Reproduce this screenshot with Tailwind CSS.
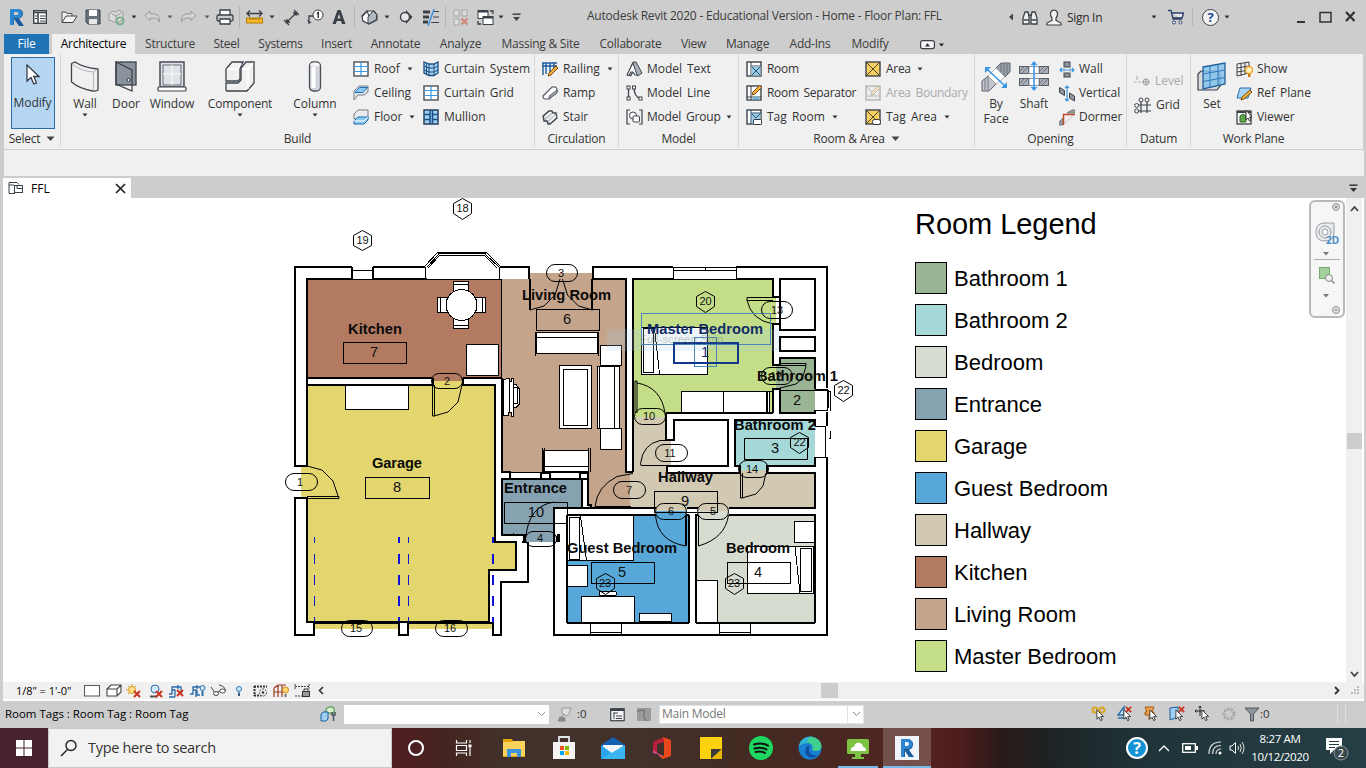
<!DOCTYPE html>
<html lang="en">
<head>
<meta charset="utf-8">
<title>Autodesk Revit 2020</title>
<script src="https://cdn.jsdelivr.net/npm/@tailwindcss/browser@4"></script>
</head>
<body class="w-[1366px] h-[768px] overflow-hidden flex flex-col bg-[#cdcdcd] text-[#2b2b2b] font-['Open_Sans','Noto_Sans',sans-serif] text-[12px] leading-none">

<svg width="0" height="0" class="hidden">
  <defs>
    <symbol id="dn" viewBox="0 0 8 6"><path d="M1.500 1.500h5L4 4.500z" fill="#333"/></symbol>
    <symbol id="dnb" viewBox="0 0 9 6"><path d="M.5 .5h8L4.500 5z" fill="#444"/></symbol>
    <symbol id="cur" viewBox="0 0 10 14"><path d="M1 .8v10.200l2.500-2.200 1.700 4 1.700-.8-1.700-3.800h3.300z" fill="#fff" stroke="#333" stroke-width="1"/></symbol>
    <symbol id="redx" viewBox="0 0 8 8"><path d="M1 1l6 6M7 1l-6 6" stroke="#c8331f" stroke-width="2"/></symbol>
    <linearGradient id="g1" x1="0" y1="0" x2="1" y2="1"><stop offset="0" stop-color="#fff"/><stop offset="1" stop-color="#b9bec4"/></linearGradient>
    <linearGradient id="g2" x1="0" y1="0" x2="0" y2="1"><stop offset="0" stop-color="#7f8896"/><stop offset="1" stop-color="#c3c8d0"/></linearGradient>
    <pattern id="hat" width="3" height="3" patternUnits="userSpaceOnUse"><rect width="3" height="3" fill="#c3c6cc"/><path d="M0 3L3 0" stroke="#555c68" stroke-width=".8"/></pattern>
  </defs>
</svg>

<!-- Title bar -->
<header class="h-[34px] flex items-center shrink-0">
  <svg class="ml-[8px]" width="17" height="20" viewBox="0 0 17 20"><path d="M2 2v16h4v-6l5 7h5l-5-7.500q4-1.500 4-5Q15 2 9 2z" fill="#1c5c9e"/><path d="M2 2h7q5 0 5 4.500T9 11H5.500v7H2z" fill="#2d86cf"/><path d="M6 5h2.500q2 0 2 1.500T8.500 8H6z" fill="#cdcdcd"/></svg>
  <svg class="ml-[8px]" width="14" height="16" viewBox="0 0 14 16"><rect x=".7" y="1.700" width="12.600" height="12.600" fill="#fff" stroke="#3a4048" stroke-width="1.400"/><path d="M1 3.500h12M5 4v10" stroke="#3a4048" stroke-width="1.500"/><path d="M7 7h5M7 9.500h5M7 12h5M2 7h2M2 9.500h2" stroke="#3a4048"/></svg>
  <svg class="ml-[14px]" width="17" height="14" viewBox="0 0 17 14"><path d="M1 12V2h4l1 1.500h5V6" fill="#eee" stroke="#555"/><path d="M1 12.500L5 6h11l-4 6.500z" fill="#f3f3f3" stroke="#444"/></svg>
  <svg class="ml-[7px]" width="16" height="16" viewBox="0 0 16 16"><path d="M1 1h14v14H3l-2-2z" fill="#69727d" stroke="#3a4048"/><rect x="4" y="1" width="8" height="6" fill="#fff"/><rect x="4" y="10" width="8" height="5" fill="#e8e8e8"/></svg>
  <svg class="ml-[7px]" width="17" height="17" viewBox="0 0 17 17"><path d="M1 5l4-3 3 1.500L11 1l4 2.500v7L9 14 1 11z" fill="#dcdcdc" stroke="#999"/><path d="M4 5l4 2v6M8 7l5-3" stroke="#999" fill="none"/><circle cx="12" cy="12" r="3.500" fill="none" stroke="#7dae8b" stroke-width="2"/></svg>
  <svg class="ml-[5px]" width="8" height="6"><use href="#dn"/></svg>
  <svg class="ml-[6px]" width="17" height="14" viewBox="0 0 17 14"><path d="M1 5.500L6 1v3h5q5 1 4.500 8Q14 8 10.500 8H6v2.500z" fill="#d4d4d4" stroke="#9a9a9a"/></svg>
  <svg class="ml-[5px] opacity-70" width="8" height="6"><use href="#dn"/></svg>
  <svg class="ml-[6px]" width="17" height="14" viewBox="0 0 17 14"><path d="M16 5.500L11 1v3H6Q1 5 1.500 12 3 8 6.500 8H11v2.500z" fill="#d4d4d4" stroke="#9a9a9a"/></svg>
  <svg class="ml-[6px] opacity-70" width="8" height="6"><use href="#dn"/></svg>
  <svg class="ml-[5px]" width="18" height="16" viewBox="0 0 18 16"><path d="M4 6V1h10v5" fill="#fff" stroke="#3a4048" stroke-width="1.300"/><rect x="1" y="6" width="16" height="6" rx="1.500" fill="#c8ccd1" stroke="#3a4048" stroke-width="1.300"/><path d="M4 10h10v5H4z" fill="#fff" stroke="#3a4048" stroke-width="1.300"/></svg>
  <div class="ml-[5px] w-px h-[22px] bg-[#b5b5b5]"></div>
  <svg class="ml-[6px]" width="17" height="16" viewBox="0 0 17 16"><path d="M1 4.500h15M4 1.500L1 4.500l3 3M13 1.500l3 3-3 3" stroke="#3a4048" stroke-width="1.300" fill="none"/><rect x=".5" y="9" width="16" height="5" fill="#f5b829" stroke="#b57b08"/><path d="M4 9v2M7 9v2M10 9v2M13 9v2" stroke="#8a5a00"/></svg>
  <svg class="ml-[5px]" width="8" height="6"><use href="#dn"/></svg>
  <svg class="ml-[7px]" width="17" height="17" viewBox="0 0 17 17"><path d="M4 13L13 4M1 11l5 5M11 1l5 5" stroke="#3a4048" stroke-width="1.200"/><path d="M2.500 14.500l1-5 4 4zM14.500 2.500l-5 1 4 4z" fill="#3a4048"/></svg>
  <svg class="ml-[7px]" width="17" height="16" viewBox="0 0 17 16"><path d="M2 14V7h5M1 11l1 3 2-1" stroke="#3a4048" stroke-width="1.300" fill="none"/><circle cx="11" cy="6" r="5" fill="#fff" stroke="#3a4048"/><path d="M9.800 4.500L11.200 3.500V9" stroke="#222" stroke-width="1.300" fill="none"/></svg>
  <svg class="ml-[8px]" width="14" height="16" viewBox="0 0 14 16"><path d="M.5 15L5.500 1h3l5 14h-3.500l-1-3H4.800l-1 3zM5.500 9.500h3L7 4.800z" fill="#3a4048" fill-rule="evenodd"/></svg>
  <div class="ml-[8px] w-px h-[22px] bg-[#b5b5b5]"></div>
  <svg class="ml-[6px]" width="17" height="16" viewBox="0 0 17 16"><path d="M1 7l5-5 7 0 3 4v5l-8 4-6-3z" fill="#fff" stroke="#3a4048" stroke-width="1.200"/><path d="M7 8l5-6 4 4-1 5-8 4z" fill="#b4bac2" stroke="#3a4048"/><path d="M1 7.500L6 2l2 5" fill="none" stroke="#3a4048" stroke-width="1.200"/></svg>
  <svg class="ml-[5px]" width="8" height="6"><use href="#dn"/></svg>
  <svg class="ml-[8px]" width="14" height="16" viewBox="0 0 14 16"><path d="M7 1l6.500 7L7 15z" fill="#3a4048"/><circle cx="6" cy="8" r="4.500" fill="#e8e8e8" stroke="#3a4048" stroke-width="1.400"/></svg>
  <svg class="ml-[9px]" width="18" height="17" viewBox="0 0 18 17"><path d="M1 3h7M1 8h6M1 13h5" stroke="#3a4048" stroke-width="3"/><path d="M12 2.500h5M11 8h6M9 13.500h8" stroke="#3a4048"/><path d="M12 0L6 17" stroke="#3a8dde" stroke-width="1.400"/></svg>
  <div class="ml-[5px] w-px h-[22px] bg-[#b5b5b5]"></div>
  <svg class="ml-[7px]" width="16" height="17" viewBox="0 0 16 17"><g fill="#ddd" stroke="#a5a5a5"><rect x="1" y="1" width="5" height="6"/><rect x="9" y="1" width="5" height="6"/><rect x="1" y="10" width="5" height="6"/></g><path d="M8.500 9.500l6 6M14.500 9.500l-6 6" stroke="#cf8877" stroke-width="2.200"/></svg>
  <svg class="ml-[8px]" width="18" height="17" viewBox="0 0 18 17"><rect x="1" y="1.500" width="10" height="8" fill="#fff" stroke="#3a4048"/><rect x="6" y="7.500" width="10" height="8" fill="#fff" stroke="#3a4048"/><path d="M1 2.500h10M6 8.500h10" stroke="#3a4048" stroke-width="2"/><path d="M13 2h3v3M1 12v3h3" stroke="#3a4048" fill="none" stroke-width="1.300"/></svg>
  <svg class="ml-[2px]" width="8" height="6"><use href="#dn"/></svg>
  <svg class="ml-[7px]" width="9" height="9" viewBox="0 0 9 9"><path d="M.5 1.200h8" stroke="#444" stroke-width="1.500"/><path d="M1 4h7L4.500 8z" fill="#444"/></svg>
  <div class="ml-[66px] w-[356px] whitespace-nowrap text-[#3c3c3c] tracking-[-0.22px] mt-[-3px]">Autodesk Revit 2020 - Educational Version - Home - Floor Plan: FFL</div>
  <svg class="ml-[65px]" width="6" height="8" viewBox="0 0 6 8"><path d="M5 .5v7L1 4z" fill="#444"/></svg>
  <svg class="ml-[8px]" width="16" height="17" viewBox="0 0 16 17"><g fill="#f2f2f2" stroke="#3a4048" stroke-width="1.300"><path d="M1 15V9l2-6h3l1 5v7zM15 15V9l-2-6h-3L9 8v7z"/><path d="M1.500 11h5M9.500 11h5M6.500 6h3" /></g></svg>
  <svg class="ml-[8px]" width="16" height="17" viewBox="0 0 16 17"><path d="M1 16v-2l5-2.500V9Q4 7 4.500 4 5.500 1 8 1t3.500 3Q12 7 10 9v2.500l5 2.500v2z" fill="#f4f4f4" stroke="#3a4048" stroke-width="1.200"/></svg>
  <div class="ml-[5px] w-[40px] tracking-[-0.3px] mt-[2px] whitespace-nowrap">Sign In</div>
  <svg class="ml-[43px]" width="8" height="6"><use href="#dn"/></svg>
  <svg class="ml-[9px]" width="17" height="16" viewBox="0 0 17 16"><path d="M1 1.500h3l2 8.500h9M4.500 4h12L15 9H6" fill="#e8e8ee" stroke="#2c3f6b" stroke-width="1.400"/><circle cx="7" cy="13.500" r="1.500" fill="#fff" stroke="#2c3f6b"/><circle cx="13.500" cy="13.500" r="1.500" fill="#fff" stroke="#2c3f6b"/></svg>
  <div class="ml-[8px] w-px h-[18px] bg-[#b5b5b5]"></div>
  <div class="ml-[9px] w-[17px] h-[17px] rounded-full border border-[#3a4048] bg-[#f4f4f4] text-[#1f4a9a] font-bold text-[13px] flex items-center justify-center">?</div>
  <svg class="ml-[4px]" width="8" height="6"><use href="#dn"/></svg>
  <svg class="ml-[65px]" width="60" height="16" viewBox="0 0 60 16"><path d="M1 13h8" stroke="#333" stroke-width="2"/><rect x="24" y="3.500" width="11" height="9.500" fill="none" stroke="#333" stroke-width="1.500"/><path d="M50 3l8.500 9M58.500 3L50 12" stroke="#333" stroke-width="2.300"/></svg>
</header>

<!-- Ribbon tabs -->
<nav class="h-[20px] flex items-center shrink-0 pl-[4px] text-center whitespace-nowrap text-[#3c3c3c] tracking-[-0.25px] *:leading-[20px] *:h-[20px]">
  <div class="w-[45px] bg-[#1f73b7] text-white">File</div>
  <div class="ml-[3px] w-[83px] bg-[#f0f0f0] text-black">Architecture</div>
  <div class="ml-px w-[68px]">Structure</div><div class="w-[45px]">Steel</div><div class="w-[63px]">Systems</div><div class="w-[49px]">Insert</div><div class="w-[69px]">Annotate</div><div class="w-[61px]">Analyze</div><div class="w-[99px]">Massing &amp; Site</div><div class="w-[81px]">Collaborate</div><div class="w-[45px]">View</div><div class="w-[63px]">Manage</div><div class="w-[62px]">Add-Ins</div><div class="w-[58px]">Modify</div>
  <svg class="ml-[21px]" width="26" height="20" viewBox="0 0 26 20"><rect x=".6" y="6.600" width="13.800" height="8" rx="2" fill="#f6f6f6" stroke="#3a4048" stroke-width="1.200"/><path d="M5 12.500h5L7.500 9z" fill="#333"/><path d="M19 9.500h5l-2.500 3z" fill="#222"/></svg>
</nav>

<!-- Ribbon -->
<section class="h-[95px] flex ml-[4px] mr-[3px] shrink-0 bg-[#f0f0f0] tracking-[-0.05px] whitespace-nowrap text-[#333]">
  <div class="w-[57px] border-r border-[#d8d8d8] mb-[2px] flex flex-col items-center">
    <div class="mt-[3px] ml-px w-[44px] h-[72px] border border-[#2a6ca8] bg-[#b5d6f3] flex flex-col items-center tracking-[-0.1px]">
      <svg class="mt-[5px]" width="16" height="24" viewBox="0 0 16 24"><path d="M2 2v16l4-3.500 2.800 6.500 2.700-1.200L8.800 13.500H14z" fill="#fff" stroke="#333a44" stroke-width="1.300"/></svg>
      <span class="mt-[10px]">Modify</span>
    </div>
    <div class="mt-[4px] flex items-center gap-[6px] tracking-[-0.3px]">Select <svg width="9" height="6"><use href="#dnb"/></svg></div>
  </div>
  <div class="w-[474px] border-r border-[#d8d8d8] mb-[2px] flex flex-col">
    <div class="flex h-[79px] pl-[4px]">
      <div class="w-[40px] flex flex-col items-center"><svg class="mt-[6px]" width="30" height="32" viewBox="0 0 30 32"><path d="M1.500 3.500L5 2q9 6 23 7v21q-3 1.500-5 1Q10 29 1.500 22z" fill="url(#g1)" stroke="#3d434b" stroke-width="1.300"/><path d="M1.500 3.500Q10 11 23.500 12v19M23.500 12L28 9" stroke="#9aa0a8" fill="none" opacity=".7"/></svg><span class="mt-[6px]">Wall</span><svg class="mt-[2px]" width="8" height="6"><use href="#dn"/></svg></div>
      <div class="w-[42px] flex flex-col items-center"><svg class="mt-[6px]" width="24" height="32" viewBox="0 0 24 32"><rect x="2" y="2" width="20" height="23" fill="#8a929c" stroke="#3d434b" stroke-width="1.300"/><path d="M2 2l16 8v21L2 24z" fill="url(#g1)" stroke="#3d434b" stroke-width="1.300"/><circle cx="14.500" cy="20" r="1.500" fill="#fff" stroke="#333"/></svg><span class="mt-[6px]">Door</span></div>
      <div class="w-[50px] flex flex-col items-center"><svg class="mt-[6px]" width="30" height="32" viewBox="0 0 30 32"><rect x="3" y="2" width="24" height="25" fill="#dfe2e6" stroke="#3d434b" stroke-width="1.400"/><rect x="6" y="5" width="18" height="20" fill="url(#g2)" stroke="#646c77"/><path d="M15 5v20M6 14h18" stroke="#f2f2f2" stroke-width="1.500"/><rect x="1" y="27" width="28" height="4" rx="1" fill="#fff" stroke="#3d434b" stroke-width="1.200"/></svg><span class="mt-[6px] tracking-[-0.15px]">Window</span></div>
      <div class="w-[86px] flex flex-col items-center"><svg class="mt-[6px]" width="32" height="32" viewBox="0 0 32 32"><path d="M2 9l6-7h11l-3 6v11l-2 2H2z" fill="url(#g1)" stroke="#3d434b" stroke-width="1.300"/><path d="M2 23h12l3-3V8l5-6h8v21l-7 8H3l-1-1z" fill="url(#g1)" stroke="#3d434b" stroke-width="1.300"/><path d="M3 9h11l3-5M18 9h6v20M24 9l5-6" stroke="#fff" fill="none" stroke-width="1.300"/></svg><span class="mt-[6px] tracking-[-0.2px]">Component</span><svg class="mt-[2px]" width="8" height="6"><use href="#dn"/></svg></div>
      <div class="w-[64px] flex flex-col items-center"><svg class="mt-[6px]" width="14" height="32" viewBox="0 0 14 32"><rect x="1.500" y="2" width="11" height="29" rx="4" fill="#d2d6db" stroke="#4a5058" stroke-width="1.300"/><rect x="3.500" y="7" width="4" height="21" fill="#fff"/><ellipse cx="7" cy="4.500" rx="4.500" ry="2" fill="#f7f7f7"/></svg><span class="mt-[6px]">Column</span><svg class="mt-[2px]" width="8" height="6"><use href="#dn"/></svg></div>
      <div class="ml-[6px] w-[70px] pt-[3px] *:h-[24px] *:flex *:items-center *:gap-[5px]">
        <div><svg width="16" height="16" viewBox="0 0 16 16"><rect x="1" y="1" width="14" height="14" fill="#fff" stroke="#3d434b" stroke-width="1.300"/><path d="M8 1v14M1 5.500h14M1 10.500h14" stroke="#3a97e0" stroke-width="1.200"/></svg>Roof <svg class="ml-px" width="8" height="6"><use href="#dn"/></svg></div>
        <div><svg width="16" height="16" viewBox="0 0 16 16"><path d="M1 15V6l5-5h9v6l-4 3H5l-4 5z" fill="#e4e7ea" stroke="#777e87"/><path d="M2 7.500l4.500-5h8l-4.500 5z" fill="#8ccaf2" stroke="#1b6fb5"/></svg>Ceiling</div>
        <div><svg width="16" height="16" viewBox="0 0 16 16"><path d="M1 10V5l4-4h10v9z" fill="#e9ebed" stroke="#777e87"/><path d="M1 12l4-4h10v3l-4 4H1z" fill="#8ccaf2" stroke="#1b6fb5"/><path d="M1 12h10l4-4" fill="none" stroke="#fff"/></svg>Floor <svg class="ml-px" width="8" height="6"><use href="#dn"/></svg></div>
      </div>
      <div class="w-[108px] pt-[3px] [word-spacing:2px] *:h-[24px] *:flex *:items-center *:gap-[5px]">
        <div><svg width="16" height="16" viewBox="0 0 16 16"><path d="M1 1l5 2h5l4-2v11l-4 2.500H6L1 12z" fill="#a9d6f5" stroke="#1d4f80" stroke-width="1.300"/><path d="M6 3v11M11 3v11M1 5l5 2h5l4-2M1 9l5 2h5l4-2M3.500 2v11" stroke="#1d4f80" fill="none"/></svg>Curtain System</div>
        <div><svg width="16" height="16" viewBox="0 0 16 16"><rect x="1" y="1" width="14" height="14" fill="#fff" stroke="#3d434b" stroke-width="1.300"/><path d="M8 1v14M1 5.500h14M1 10.500h14" stroke="#3a97e0" stroke-width="1.200"/></svg>Curtain Grid</div>
        <div><svg width="16" height="16" viewBox="0 0 16 16"><rect x="1" y="1" width="14" height="14" fill="#9fd0f3" stroke="#26405c" stroke-width="1.500"/><path d="M7 1v14M9.500 1v14M1 5.500h6M10 5.500h5M1 10.500h6M10 10.500h5" stroke="#1d5288" stroke-width="1.600"/></svg>Mullion</div>
      </div>
    </div>
    <div class="text-center tracking-[-0.2px]">Build</div>
  </div>
  <div class="w-[84px] border-r border-[#d8d8d8] mb-[2px] flex flex-col">
    <div class="h-[79px] pl-[7px] pt-[3px] *:h-[24px] *:flex *:items-center *:gap-[5px]">
      <div><svg width="16" height="16" viewBox="0 0 16 16"><path d="M0 2h15M0 5h15M1 2v12M4 2v11M8 2v9M12 2v6" stroke="#1d5c9a" stroke-width="1.400"/><path d="M6 15l1-3 7-7 2 2-7 7z" fill="#f5b13a" stroke="#7d4b10"/></svg>Railing <svg class="ml-px" width="8" height="6"><use href="#dn"/></svg></div>
      <div><svg width="16" height="16" viewBox="0 0 16 16"><path d="M1 11L10 2q5-1 5 3v2l-8 7H3q-2 0-2-3z" fill="#fff" stroke="#555c66" stroke-width="1.200"/><path d="M7 14v-3l8-6v3z" fill="#9aa0a8" stroke="#555c66" stroke-width=".8"/></svg>Ramp</div>
      <div><svg width="16" height="16" viewBox="0 0 16 16"><path d="M1 7l6-5h3l1 2h3l1 5-7 6H6L5 12H2z" fill="#c2c6cc" stroke="#3d434b" stroke-width="1.300"/><path d="M3 8l6-5M5 11l7-6M8 13l6-6" stroke="#fff" stroke-width="1.500"/></svg>Stair</div>
    </div>
    <div class="text-center tracking-[-0.2px]">Circulation</div>
  </div>
  <div class="w-[120px] border-r border-[#d8d8d8] mb-[2px] flex flex-col">
    <div class="h-[79px] pl-[7px] pt-[3px] [word-spacing:2px] *:h-[24px] *:flex *:items-center *:gap-[4px]">
      <div><svg width="17" height="16" viewBox="0 0 17 16"><path d="M1 14L7 1h3l6 11-4 3-2-3H6l-1 3z" fill="#aab0b8" stroke="#3d434b"/><path d="M1 14L7 2l4 12H8.500L7.500 11H4.500L3.500 14z" fill="#fff" stroke="#3d434b"/></svg>Model Text</div>
      <div><svg width="17" height="16" viewBox="0 0 17 16"><path d="M2.500 2v12M8 2q0 10 7 12" stroke="#3d434b" stroke-width="1.300" fill="none"/><g fill="#fff" stroke="#3d434b"><rect x="1" y="1" width="3" height="3"/><rect x="1" y="12" width="3" height="3"/><rect x="6.500" y="1" width="3" height="3"/><rect x="13" y="12" width="3" height="3"/></g></svg>Model Line</div>
      <div class="tracking-[-0.2px]"><svg width="17" height="16" viewBox="0 0 17 16"><path d="M4 1H1v14h3M13 1h3v14h-3" stroke="#3d434b" stroke-width="1.200" fill="none"/><circle cx="7" cy="6.500" r="3.500" fill="#fff" stroke="#3d434b"/><rect x="7" y="7" width="6.500" height="6" rx="1" fill="#fff" stroke="#3d434b"/></svg>Model Group <svg width="8" height="6"><use href="#dn"/></svg></div>
    </div>
    <div class="text-center tracking-[-0.2px]">Model</div>
  </div>
  <div class="w-[236px] border-r border-[#d8d8d8] mb-[2px] flex flex-col">
    <div class="h-[79px] pl-[7px] flex [word-spacing:2px] tracking-[-0.3px]">
      <div class="w-[119px] pt-[3px] *:h-[24px] *:flex *:items-center *:gap-[5px]">
        <div><svg width="16" height="16" viewBox="0 0 16 16"><rect x="1" y="1" width="14" height="14" fill="#fff" stroke="#3d434b" stroke-width="1.400"/><path d="M5 1v14M5 5h10" stroke="#3d434b"/><rect x="5.500" y="5.500" width="9" height="9" fill="#9ccbe6"/><path d="M6 6l8 8M14 6l-8 8" stroke="#26506e"/></svg>Room</div>
        <div><svg width="16" height="16" viewBox="0 0 16 16"><rect x="1" y="1" width="14" height="14" fill="#fff" stroke="#3d434b" stroke-width="1.400"/><path d="M5 1v14M1 12h14" stroke="#3d434b"/><path d="M5.500 14.500l4-4 5 4z" fill="#6fb4de"/><path d="M6 10l1-3 6.500-6.500 2 2L9 9z" fill="#f5b13a" stroke="#7d4b10"/></svg>Room Separator</div>
        <div class="tracking-[0px]"><svg width="16" height="16" viewBox="0 0 16 16"><rect x="1" y="1" width="14" height="14" fill="#fff" stroke="#3d434b" stroke-width="1.400"/><rect x="5.500" y="4.500" width="9" height="10" fill="#9ccbe6"/><path d="M5 1v14M5 4h10M6 5l4 4 4-4" stroke="#26506e" fill="none"/><rect x="7.500" y="10.500" width="8" height="5" rx="1" fill="#fff" stroke="#333"/></svg>Tag Room <svg class="ml-px" width="8" height="6"><use href="#dn"/></svg></div>
      </div>
      <div class="pt-[3px] *:h-[24px] *:flex *:items-center *:gap-[5px]">
        <div><svg width="16" height="16" viewBox="0 0 16 16"><rect x="1" y="1" width="14" height="14" fill="#f7cf5e" stroke="#3d434b" stroke-width="1.400"/><path d="M1 1l14 14M15 1L1 15" stroke="#4b4330"/></svg>Area <svg width="8" height="6"><use href="#dn"/></svg></div>
        <div class="text-[#ababab]"><svg width="16" height="16" viewBox="0 0 16 16"><rect x="1" y="1" width="14" height="14" fill="#ececec" stroke="#b4b4b4" stroke-width="1.400"/><path d="M1 11h14M1 1l6 6M7 9l6-7" stroke="#b9b9b9"/><path d="M6 10l1-3 6-6 2 2-6 6z" fill="#f2e3c8" stroke="#c4bba9"/></svg>Area Boundary</div>
        <div class="tracking-[0px]"><svg width="16" height="16" viewBox="0 0 16 16"><rect x="1" y="1" width="14" height="14" fill="#f7cf5e" stroke="#3d434b" stroke-width="1.400"/><path d="M1 1l14 14M15 1L1 15" stroke="#4b4330"/><rect x="7.500" y="10.500" width="8" height="5" rx="2" fill="#fff" stroke="#333"/></svg>Tag Area <svg class="ml-px" width="8" height="6"><use href="#dn"/></svg></div>
      </div>
    </div>
    <div class="flex items-center justify-center gap-[6px] tracking-[-0.2px]">Room &amp; Area <svg width="9" height="6"><use href="#dnb"/></svg></div>
  </div>
  <div class="w-[152px] border-r border-[#d8d8d8] mb-[2px] flex flex-col">
    <div class="h-[79px] flex">
      <div class="w-[42px] flex flex-col items-center"><svg class="mt-[6px]" width="30" height="32" viewBox="0 0 30 32"><path d="M1 31V21l6-5 8 8-7 7z" fill="#c3c6cc" stroke="#5b626c"/><path d="M15 8l5-5h9v9l-5 5z" fill="#9ea3ab" stroke="#5b626c"/><path d="M4 19v11M7 17v13M20 4v8M23 4v12M26 4v10" stroke="#5b626c" stroke-width=".8"/><path d="M7 16l8-8 9 9-9 7z" fill="#fff" stroke="#9aa0a8" stroke-width=".7"/><path d="M6 9l18 17" stroke="#3a97e8" stroke-width="1.600"/><path d="M4 7h6l-6 6zM26 28h-6l6-6z" fill="#3a97e8"/></svg><span class="mt-[6px]">By</span><span class="mt-[3px]">Face</span></div>
      <div class="w-[34px] flex flex-col items-center"><svg class="mt-[6px]" width="32" height="32" viewBox="0 0 32 32"><g fill="#a9adb5" stroke="#5b626c"><rect x="1.500" y="6.500" width="9" height="7"/><rect x="21.500" y="6.500" width="9" height="7"/><rect x="1.500" y="18.500" width="9" height="7"/><rect x="21.500" y="18.500" width="9" height="7"/></g><path d="M2 11l4-4M4 13l6-6M2 23l4-4M4 25l6-6M22 11l4-4M24 13l6-6M22 23l4-4M24 25l6-6" stroke="#676e79" stroke-width=".9"/><path d="M11 6.500h10v7H11zM11 18.500h10v7H11z" fill="#fff" stroke="#8a9099"/><path d="M16 3v26" stroke="#3a97e8" stroke-width="1.600"/><path d="M12.500 5L16 1l3.500 4zM12.500 27l3.500 4 3.500-4z" fill="#3a97e8"/></svg><span class="mt-[6px]">Shaft</span></div>
      <div class="ml-[8px] pt-[3px] *:h-[24px] *:flex *:items-center *:gap-[4px]">
        <div><svg width="16" height="17" viewBox="0 0 16 17"><rect x="5" y="1" width="6" height="5" fill="#8f949d" stroke="#3d434b"/><rect x="5" y="12" width="6" height="4" fill="#8f949d" stroke="#3d434b"/><path d="M5 6v6M11 6v6" stroke="#bbb"/><path d="M1 9h14M3 7L1 9l2 2M13 7l2 2-2 2" stroke="#3a97e0" fill="none" stroke-width="1.200"/></svg>Wall</div>
        <div><svg width="16" height="17" viewBox="0 0 16 17"><path d="M.5 2.500l5 3v5l-5-3zM10.500 8l5 3v5l-5-3z" fill="#8f949d" stroke="#3d434b"/><path d="M8 1v15M6 3l2-2 2 2M6 14l2 2 2-2" stroke="#3a97e0" fill="none" stroke-width="1.200"/></svg>Vertical</div>
        <div><svg width="16" height="17" viewBox="0 0 16 17"><path d="M0 16v-3l4-4v7zM8 4l5-3h3v3z" fill="#9a9fa7" stroke="#777"/><path d="M4.500 16V5.500H16" stroke="#c04a26" stroke-width="1.500" fill="none"/><path d="M6 14l9-8" stroke="#999" stroke-dasharray="1 1"/></svg>Dormer</div>
      </div>
    </div>
    <div class="text-center tracking-[-0.2px]">Opening</div>
  </div>
  <div class="w-[64px] border-r border-[#d8d8d8] mb-[2px] flex flex-col">
    <div class="h-[79px] pl-[7px] pt-[15px] *:h-[24px] *:flex *:items-center *:gap-[5px]">
      <div class="text-[#ababab]"><svg width="16" height="16" viewBox="0 0 16 16"><path d="M0 9h9" stroke="#b0b0b0" stroke-dasharray="3 1"/><path d="M3 3v4" stroke="#aaa"/><circle cx="12" cy="9" r="3" fill="#ddd" stroke="#a5a5a5"/><path d="M12 5v8M8 9h8" stroke="#a5a5a5"/></svg>Level</div>
      <div class="gap-[4px]"><svg width="17" height="17" viewBox="0 0 17 17"><path d="M7 5v11M13 5v11M5 8h12M5 14h12" stroke="#3d434b" stroke-width="1.200"/><g fill="#f0f0f0" stroke="#3d434b"><circle cx="7" cy="3" r="2"/><circle cx="13" cy="3" r="2"/><circle cx="2.700" cy="8.500" r="2"/><circle cx="2.700" cy="14" r="2"/></g></svg>Grid</div>
    </div>
    <div class="text-center tracking-[-0.2px]">Datum</div>
  </div>
  <div class="w-[125px] flex flex-col">
    <div class="h-[79px] flex">
      <div class="w-[42px] flex flex-col items-center"><svg class="mt-[6px]" width="30" height="32" viewBox="0 0 30 32"><path d="M1 14l3-3h17l2 4v11l-3 4H1z" fill="#d8dadd" stroke="#3d434b" stroke-width="1.200"/><path d="M6 7l22-4v21L6 29z" fill="#7fc0ee" fill-opacity=".8" stroke="#215f98" stroke-width="1.300"/><path d="M13 6v21M21 4.500v21M6 14l22-4M6 21.500l22-4" stroke="#2f78b8"/></svg><span class="mt-[6px]">Set</span></div>
      <div class="ml-[3px] pt-[3px] [word-spacing:2px] *:h-[24px] *:flex *:items-center *:gap-[4px]">
        <div><svg width="17" height="17" viewBox="0 0 17 17"><path d="M1 3l12-2v11L1 15zM5 2v13M9 2v11M1 7l12-2M1 11l12-2" fill="none" stroke="#3d434b"/><circle cx="13" cy="9" r="3.500" fill="#fff2c4" stroke="#f0a020" stroke-width="1.300"/><rect x="12" y="13" width="2.500" height="3" fill="#c77b12"/></svg>Show</div>
        <div><svg width="17" height="17" viewBox="0 0 17 17"><path d="M4 3h11l-3 10H1z" fill="#a6d4f4" stroke="#2a6ca8"/><path d="M5 15l1-3 8-7 2 2-8 7z" fill="#f5b13a" stroke="#7d4b10"/></svg>Ref Plane</div>
        <div><svg width="17" height="17" viewBox="0 0 17 17"><rect x="1" y="2" width="14" height="13" fill="#f6f6f6" stroke="#3d434b" stroke-width="1.300"/><path d="M1 3h14" stroke="#3d434b" stroke-width="2"/><path d="M4 7l3-2 3 2v6H4z" fill="#5ea84d" stroke="#2f6b25"/><path d="M10 1v10l2-2 1.500 3 1.500-1-1.500-3H16z" fill="#fff" stroke="#333"/></svg>Viewer</div>
      </div>
    </div>
    <div class="text-center tracking-[-0.2px]">Work Plane</div>
  </div>
</section>
<div class="h-[26px] shrink-0 mt-px ml-[4px] mr-[2px] bg-[#f0f0f0]"></div>

<!-- Document tabs -->
<div class="h-[22px] shrink-0 flex items-end pl-[3px]">
  <div class="w-[128px] h-[20px] bg-white flex items-center tracking-[-0.3px]">
    <svg class="ml-[5px]" width="16" height="14" viewBox="0 0 16 14"><path d="M1 12.500v-11h8l2 2" fill="#fff" stroke="#3a4048"/><rect x="6.500" y="4.500" width="8" height="7" fill="#fff" stroke="#3a4048"/><path d="M9 4.500v3h5M1 4h5M1 12.500h6" stroke="#3a4048" fill="none"/></svg>
    <span class="ml-[7px] mt-[2px] text-black tracking-[0px]">FFL</span>
    <svg class="ml-[65px]" width="11" height="11" viewBox="0 0 11 11"><path d="M1 1l9 9M10 1l-9 9" stroke="#222" stroke-width="1.700"/></svg>
  </div>
  <svg class="ml-auto mr-[8px] mb-[5px]" width="9" height="9" viewBox="0 0 9 9"><path d="M.5 1.200h8" stroke="#333" stroke-width="1.500"/><path d="M1 4h7L4.500 8z" fill="#333"/></svg>
</div>

<!-- Drawing area -->
<main class="h-[484px] shrink-0 ml-[3px] mr-[2px] bg-white flex">
  <svg class="ml-[277px] shrink-0" width="590" height="484" viewBox="280 198 590 484" font-family="Liberation Sans, Arial, sans-serif" fill="none" stroke="#000" stroke-width="1" shape-rendering="crispEdges">
    <!-- room fills -->
    <g stroke="none">
      <path d="M307 279h194v99H307zM433 378h30v3h-30z" fill="#b17a61"/>
      <path d="M502 279h27v-6h64v6h33v193h4v35h-42v-35h-86z" fill="#c4a48a"/>
      <path d="M301 466h6v-81h126v-4h30v4h32v157h21v28h-27v52h4v7h-85v-7h-9v7h-84v-7h-8V498h-6z" fill="#e3d66f"/>
      <path d="M502 479h80v29h-28v34h-29v-7h-23z" fill="#86a1b0"/>
      <path d="M633 279h140v18h3v27h-3v40h3v24h-3v25h-107v4H633z" fill="#c3de87"/>
      <path d="M776 364h4v-6h35v55h-35v-25h-4z" fill="#9ab594"/>
      <path d="M735 420h80v46h-48v4h-27v-4h-5z" fill="#a5d8d6"/>
      <path d="M633 417h34v24h4v25h-4v7h73v-3h27v3h48v34H729v4h-31v-4h-11v4h-31v-4h-26v-34h3z" fill="#d2c9b2"/>
      <path d="M567 515h89v-4h31v4h2v108H567z" fill="#57a8d8"/>
      <path d="M696 515h2v-4h31v4h86v108H696z" fill="#d6dccf"/>
    </g>
    <!-- walls -->
    <g stroke-width="2">
      <path d="M308 466H295V267h57M373 267h52M500 267h29v12M593 279v-12h80M736 267h91v121M827 412v14M827 457v178H554V508h102M308 498H295v137h19v-13"/>
      <path d="M307 466V279h45M373 279h54M307 378V279M307 378h126M463 378h39M433 378v7H307v81M463 378v7h32v157h21v28h-27v52M463 385h32M307 498v124h183M399 622v13h9v-13M493 622v13h8V582h27v-40M352 267v12M373 267v12"/>
      <path d="M593 279h33v193h7M633 472V279h40M736 279h37v18h7v-18h35v51h-35v-6h-7v41h7v-7h35v31M815 410v3h-35v-24h-7v24M780 337h35v14h-35zM666 413h107M666 413v27h8v-20h54v46h-61v7h73v-7h-5v-46h80v6M815 457v9h-48v7h48v35h-86M502 378v94h8v7h-8v56h23M582 479v29h-28M567 515h89M567 515v108M689 515v108M689 515h-3M698 515h-2v108M729 515h86v108M567 623h122M696 623h119M687 508h11"/>
      <path d="M510 479h72M541 473v6h9v-6zM580 473h8v6h-8zM588 479v26h3v2M525 536v6h-3M557 536v6M554 508v28"/>
      <path d="M524 534v8M558 534v8" stroke-width="3"/>
    </g>
    <path d="M510 472.500h78M588.500 507.500h42"/>
    <!-- bay and windows -->
    <path d="M352 279.500h149.500v99M425.500 267v12M499.500 267v12M425 266l13-14h48l14 14M428 268l12-13h44l13 13M427 267l12-13M499 267l-14-13M352 270.500h21M673.500 267v12h63v-12zM673 270.500h63M705.500 267v4"/>
    <path d="M438 253h48" stroke-width="2"/>
    <path d="M590 623.500h31v11h-31zM590 632.500h31M719.500 623.500h31v11h-31zM719 632.500h31M815 389.500h12v21h-12M827 391.500h3v19M815 426.500h10v31h-10M825 428v27M830.500 431v7h-2M513 533v2"/>
    <!-- furniture -->
    <g fill="#fff">
      <rect x="453.500" y="281.500" width="15" height="10"/><rect x="453.500" y="318.500" width="15" height="10"/><rect x="437.500" y="297.500" width="10" height="15"/><rect x="475.500" y="297.500" width="10" height="15"/>
      <path d="M453 284.500h15M453 325.500h15M440.500 297v15M482.500 297v15"/>
      <circle cx="461.500" cy="305" r="15.500"/>
      <rect x="466.500" y="344.500" width="32" height="31"/><rect x="345.500" y="385.500" width="63" height="24"/>
      <path d="M503 379.500l6-1v3h2v-3h2v6h3l3 4v16l-3 3h-3v9h-2v-4h-2l-1 3h-5zM509.500 381v32M513.500 384v24M514 387.500h3v16h-3"/>
      <rect x="536.500" y="332.500" width="61" height="21"/><path d="M535.500 332v24M598.500 332v24M537 337.500h60"/>
      <rect x="600.500" y="345.500" width="21" height="20"/><rect x="600.500" y="428.500" width="21" height="21"/>
      <rect x="597.500" y="366.500" width="22" height="62"/><path d="M614.500 366v62M599.500 366v62"/>
      <rect x="559.500" y="365.500" width="32" height="63"/><rect x="563.500" y="369.500" width="24" height="56"/>
      <rect x="543.500" y="450.500" width="45" height="21"/><path d="M542.500 448v24M544.500 448v24M588.500 448v24M590.500 448v24M544 466.500h45"/>
      <rect x="641.500" y="327.500" width="66" height="47"/><rect x="643.500" y="328.500" width="10" height="44"/><path d="M654.500 328l5 46"/>
      <rect x="681.500" y="391.500" width="85" height="21"/><path d="M723.500 392v21M767.500 391v21h6v-21z"/>
      <rect x="567.500" y="515.500" width="66" height="45"/><rect x="569.500" y="517.500" width="10" height="42"/><path d="M580.500 516l6 45"/>
      <rect x="567.500" y="565.500" width="20" height="21"/><rect x="581.500" y="596.500" width="53" height="26"/><path d="M600 596l-1-4 3-1h10l4 1v3z"/><rect x="639.500" y="613.500" width="32" height="8"/>
      <rect x="794.500" y="521.500" width="20" height="21"/><rect x="747.500" y="546.500" width="66" height="47"/><rect x="800.500" y="548.500" width="11" height="43"/><path d="M795 547l5 46"/>
      <rect x="696.500" y="580.500" width="21" height="42"/>
      <path d="M780 279h35v51h-35zM780 337h35v14h-35z" stroke-width="2"/>
    </g>
    <path d="M769 391h3v21h-3z" fill="#c3de87"/>
    <!-- doors -->
    <g shape-rendering="auto" stroke-width="1">
      <path d="M432.500 385v31h2v-31M434 416l14-4 10-10 4-17M307 466l15 4 11 11 5 15M307 496.500h32v2h-32M530 310l14-4 11-11 5-16M592.500 310l-14-4-11-11-5-16"/>
      <path d="M773 297.500h-26v3h26M747 300q4 20 26 24M780 363.500h26v2h-26M806 366q-3 14-10 18l-16 4M635 413v-32h2v32M637 383q24 4 28 30M667 465.500h-26l-.5-2Q643 444 660 440.500h7M631 506.500h-36q2-20 22-30l16-3M655.500 515q2 26 30 31v-30M686.500 515v31M698.500 515v31q27-8 30-31M740.500 473v25h2v-25M742 498l14-4 7-8 3-13M526 536q3-30 28-34"/>
    </g>
    <path d="M530 279v31M592 279v31" stroke-width="2"/>
    <path d="M314.500 537v86M408.500 537v86" stroke="#1010d8" stroke-dasharray="6 11 10 11 10 11 10 11"/>
    <path d="M399 537v86M493 537v86" stroke="#1010d8" stroke-width="2" stroke-dasharray="6 11 10 11 10 11 10 11"/>
    <path d="M307 622h183M315 623h84M408 623h85" stroke-width="2"/>
    <!-- room number boxes -->
    <path d="M343.500 342.500h63v21h-63zM536.500 309.500h63v21h-63zM365.500 477.500h64v21h-64zM504.500 502.500h63v21h-63zM744.500 438.500h63v21h-63zM654.500 491.500h63v21h-63zM591.500 562.500h63v21h-63zM727.500 562.500h63v21h-63zM780.500 390.500h48v17"/>
    <!-- selected tag -->
    <rect x="607" y="329" width="172" height="22" fill="#a9cfe8" fill-opacity=".2" stroke="none"/>
    <path d="M641.500 313.500h129v31h-129zM694.500 337.500h22v29h-22z" stroke="#4f86b8"/>
    <rect x="674" y="343" width="64" height="20" stroke="#12388c" stroke-width="2"/>
    <text x="640" y="343" font-size="11" fill="#6f8f62" stroke="none" textLength="83" opacity=".4">Full-screen Snip</text>
    <!-- door and window tags -->
    <g shape-rendering="auto">
      <g>
        <rect x="285.500" y="473.500" width="32" height="17" rx="8.500"/><rect x="431.500" y="373.500" width="31" height="15" rx="7.500"/><rect x="546.500" y="264.500" width="31" height="17" rx="8.500"/><rect x="525.500" y="531.500" width="31" height="15" rx="7.500"/><rect x="697.500" y="503.500" width="31" height="16" rx="8"/><rect x="655.500" y="503.500" width="31" height="16" rx="8"/><rect x="613.500" y="481.500" width="32" height="17" rx="8.500"/><rect x="634.500" y="408.500" width="31" height="16" rx="8"/><rect x="655.500" y="444.500" width="32" height="17" rx="8.500"/><rect x="761.500" y="367.500" width="31" height="17" rx="8.500"/><rect x="761.500" y="301.500" width="31" height="17" rx="8.500"/><rect x="738.500" y="460.500" width="30" height="17" rx="8.500"/><rect x="341.500" y="620.500" width="31" height="16" rx="8"/><rect x="435.500" y="620.500" width="32" height="16" rx="8"/>
      </g>
      <path d="M362.500 230.500l9 5v10l-9 5-9-5v-10zM462.500 198.500l9 5v10l-9 6-9-6v-10zM705.500 291.500l9 5v10l-9 6-9-6v-10zM843.500 380.500l9 5v10l-9 6-9-6v-10zM799.500 432.500l9 5v10l-9 6-9-6v-10zM605.500 573.500l9 5v10l-9 6-9-6v-10zM734.500 573.500l9 5v10l-9 6-9-6v-10z"/>
    </g>
    <g fill="#111" stroke="none" font-size="11" text-anchor="middle">
      <text x="362.500" y="244">19</text><text x="462.500" y="212">18</text><text x="705.500" y="305">20</text><text x="843.500" y="394">22</text><text x="799.500" y="446">22</text><text x="605" y="587">23</text><text x="734" y="587">23</text>
      <text x="300" y="486">1</text><text x="447" y="385">2</text><text x="561" y="277">3</text><text x="540" y="542">4</text><text x="713" y="515">5</text><text x="671" y="515">6</text><text x="629" y="494">7</text><text x="649" y="420">10</text><text x="670" y="457">11</text><text x="776" y="380">12</text><text x="777" y="314">13</text><text x="752" y="473">14</text><text x="356" y="632">15</text><text x="450" y="632">16</text>
    </g>
    <g fill="#111" stroke="none" font-size="14.670" text-anchor="middle">
      <text x="374" y="357">7</text><text x="567" y="324">6</text><text x="397" y="492">8</text><text x="536" y="517">10</text><text x="775" y="453">3</text><text x="685" y="506">9</text><text x="622" y="577">5</text><text x="758" y="577">4</text><text x="797" y="405">2</text><text x="705" y="357" fill="#12307a">1</text>
    </g>
    <g fill="#0a0a0a" stroke="none" font-size="14.670" font-weight="700">
      <text x="348" y="334" textLength="54">Kitchen</text><text x="522" y="300" textLength="89">Living Room</text><text x="372" y="468" textLength="50">Garage</text><text x="504" y="493" textLength="63">Entrance</text><text x="647" y="334" textLength="116" fill="#122c66">Master Bedroom</text><text x="757" y="381" textLength="81">Bathroom 1</text><text x="734" y="430" textLength="82">Bathroom 2</text><text x="658" y="482" textLength="55">Hallway</text><text x="567" y="553" textLength="110">Guest Bedroom</text><text x="726" y="553" textLength="64">Bedroom</text>
    </g>
  </svg>
  <!-- legend -->
  <div class="ml-[45px] w-[260px] shrink-0 font-['Liberation_Sans',Arial,sans-serif] text-black text-[22px]">
    <h1 class="text-[29px] mt-[12px] h-[52px] whitespace-nowrap tracking-[-0.05px]">Room Legend</h1>
    <ul class="*:h-[42px] *:flex *:items-start *:gap-[7px] *:leading-[33px] *:whitespace-nowrap">
      <li><i class="w-[32px] h-[32px] border border-black bg-[#9ab594]"></i>Bathroom 1</li>
      <li><i class="w-[32px] h-[32px] border border-black bg-[#a5d8d6]"></i>Bathroom 2</li>
      <li><i class="w-[32px] h-[32px] border border-black bg-[#d6dccf]"></i>Bedroom</li>
      <li><i class="w-[32px] h-[32px] border border-black bg-[#86a1b0]"></i>Entrance</li>
      <li><i class="w-[32px] h-[32px] border border-black bg-[#e3d66f]"></i>Garage</li>
      <li><i class="w-[32px] h-[32px] border border-black bg-[#57a8d8]"></i>Guest Bedroom</li>
      <li><i class="w-[32px] h-[32px] border border-black bg-[#d2c9b2]"></i>Hallway</li>
      <li><i class="w-[32px] h-[32px] border border-black bg-[#b17a61]"></i>Kitchen</li>
      <li><i class="w-[32px] h-[32px] border border-black bg-[#c4a48a]"></i>Living Room</li>
      <li><i class="w-[32px] h-[32px] border border-black bg-[#c3de87]"></i>Master Bedroom</li>
    </ul>
  </div>
  <!-- navigation bar -->
  <div class="ml-[134px] mt-[2px] w-[36px] h-[118px] shrink-0 rounded-[6px] border-2 border-[#b9b9b9] bg-[#f6f6f6] flex flex-col items-center">
    <svg width="32" height="114" viewBox="0 0 32 114"><circle cx="25" cy="5" r="3.500" fill="#ddd" stroke="#999"/><path d="M23.500 3.500l3 3M26.500 3.500l-3 3" stroke="#888"/><path d="M5 30q0-9 9-9h9v9q0 9-9 9-9 0-9-9z" fill="#e8eaed" stroke="#9aa0a6"/><circle cx="14" cy="30" r="6" fill="none" stroke="#9aa0a6"/><circle cx="14" cy="30" r="3" fill="#f7f7f7" stroke="#9aa0a6"/><text x="15" y="42" font-size="10" font-weight="700" fill="#4a90c8">2D</text><path d="M12 50h6l-3 3.500zM12 92h6l-3 3.500z" fill="#777"/><path d="M3 57.500h26" stroke="#b0b0b0"/><rect x="8.500" y="65.500" width="10" height="11" fill="#a3cf9a" stroke="#7aa871"/><circle cx="18" cy="76" r="3.500" fill="#eee" stroke="#888"/><path d="M20.500 78.500l3 3" stroke="#888" stroke-width="1.500"/><circle cx="25" cy="108" r="3.500" fill="#ddd" stroke="#999"/><path d="M23.500 108h3" stroke="#888"/></svg>
  </div>
  <!-- vertical scroll bar -->
  <div class="ml-auto mr-[2px] w-[16px] shrink-0 bg-[#f0f0f0] flex flex-col items-center">
    <svg class="mt-[8px]" width="9" height="6" viewBox="0 0 9 6"><path d="M1 5l3.500-4L8 5" fill="none" stroke="#444" stroke-width="1.800"/></svg>
    <div class="mt-[221px] w-[15px] h-[16px] bg-[#cdcdcd]"></div>
    <svg class="mt-[222px]" width="9" height="6" viewBox="0 0 9 6"><path d="M1 1l3.500 4L8 1" fill="none" stroke="#444" stroke-width="1.800"/></svg>
  </div>
</main>

<!-- View control bar -->
<div class="h-[19px] shrink-0 ml-[3px] mr-[2px] bg-[#f0f0f0] border-b-2 border-white flex items-center text-black">
  <div class="ml-[13px] w-[68px] text-[11px] tracking-[-0.05px] whitespace-nowrap">1/8" = 1'-0"</div>
  <svg width="16" height="14" viewBox="0 0 16 14"><rect x=".5" y="1.500" width="15" height="10.500" fill="#fff" stroke="#555"/></svg>
  <svg class="ml-[6px]" width="16" height="14" viewBox="0 0 16 14"><path d="M1 5l4-4h10v7l-4 4H1zM1 5h10v7M11 5l4-4" fill="#fff" stroke="#444" stroke-width="1.100"/></svg>
  <svg class="ml-[4px]" width="16" height="14" viewBox="0 0 16 14"><circle cx="6" cy="6" r="3.500" fill="#ffe08a" stroke="#d99a1b"/><path d="M6 0v2M0 6h2M2 2l1 1M10 2l-1 1M2 10l1-1" stroke="#d99a1b"/><path d="M8 7l6 6M14 7l-6 6" stroke="#c8331f" stroke-width="2"/></svg>
  <svg class="ml-[6px]" width="16" height="14" viewBox="0 0 16 14"><circle cx="7" cy="5" r="4" fill="#d6ecfa" stroke="#2a6ca8"/><path d="M2 12.500h7" stroke="#555" stroke-width="2"/><path d="M8 7l6 6M14 7l-6 6" stroke="#c8331f" stroke-width="2"/></svg>
  <svg class="ml-[4px]" width="17" height="14" viewBox="0 0 17 14"><path d="M1 10h3V3h9v6M4 6h3v7M10 1v4M1 13h6" stroke="#2a6ca8" fill="none" stroke-width="1.300"/><path d="M9 6l6 6M15 6l-6 6" stroke="#c8331f" stroke-width="2"/></svg>
  <svg class="ml-[4px]" width="17" height="14" viewBox="0 0 17 14"><path d="M1 10h3V3h7M4 6h3v7M8 6v5h3M8 1v4" stroke="#2a6ca8" fill="none" stroke-width="1.300"/><circle cx="13.500" cy="4" r="2.500" fill="#cfe9fb" stroke="#2a6ca8"/><path d="M13.500 7v5" stroke="#2a6ca8" stroke-width="2"/></svg>
  <svg class="ml-[4px]" width="17" height="14" viewBox="0 0 17 14"><path d="M1 3l4 6M9 1q6 1 6.500 6M8 8l2-1" stroke="#444" fill="none"/><ellipse cx="6" cy="9.500" rx="2.500" ry="2" fill="#fff" stroke="#444"/><ellipse cx="12.500" cy="7" rx="2.800" ry="2" fill="#fff" stroke="#444"/></svg>
  <svg class="ml-[8px]" width="8" height="14" viewBox="0 0 8 14"><circle cx="4" cy="5" r="2.500" fill="#cfe9fb" stroke="#2a7cc0"/><path d="M4 8.500v3.500" stroke="#3a5a7a" stroke-width="2"/></svg>
  <svg class="ml-[10px]" width="15" height="14" viewBox="0 0 15 14"><path d="M1 2.500h13M1.500 2v10M1 11.500h7" fill="none" stroke="#333" stroke-width="2" stroke-dasharray="2 1"/><circle cx="10" cy="8.500" r="3.500" fill="#f4f4f4" stroke="#333" stroke-dasharray="2 1"/><circle cx="10" cy="8.500" r="1.300" fill="#333"/></svg>
  <svg class="ml-[5px]" width="17" height="14" viewBox="0 0 17 14"><path d="M1 4l4-3h8M1 4v9M5 1v12M9 1v12M1 8h11" stroke="#9b3c24" fill="none" stroke-width="1.200"/><circle cx="12.500" cy="6" r="3" fill="#ffd978" stroke="#d98c1b"/><path d="M12.500 10v3" stroke="#777" stroke-width="2"/></svg>
  <svg class="ml-[4px]" width="17" height="14" viewBox="0 0 17 14"><path d="M1 0v5M1 2.500h14M15 0v5M1 12h7" stroke="#444" stroke-dasharray="2 1"/><rect x="8.500" y="7.500" width="7" height="5" fill="#999" stroke="#333"/><path d="M10 7V5h4v2" stroke="#333" fill="none"/></svg>
  <svg class="ml-[7px]" width="6" height="9" viewBox="0 0 6 9"><path d="M5 1L1.500 4.500 5 8" fill="none" stroke="#333" stroke-width="1.600"/></svg>
  <div class="ml-[497px] w-[17px] h-[15px] bg-[#cdcdcd]"></div>
  <svg class="ml-[496px]" width="6" height="9" viewBox="0 0 6 9"><path d="M1 1l3.500 3.500L1 8" fill="none" stroke="#333" stroke-width="1.800"/></svg>
  <svg class="ml-auto mr-[4px]" width="9" height="9" viewBox="0 0 9 9"><path d="M6 0h2v2H6zM6 3h2v2H6zM6 6h2v2H6zM3 3h2v2H3zM3 6h2v2H3zM0 6h2v2H0z" fill="#bbb"/></svg>
</div>

<!-- Status bar -->
<footer class="h-[27px] shrink-0 flex items-center pb-px text-black text-[11.500px] tracking-[-0.02px]">
  <div class="ml-[5px] w-[315px] whitespace-nowrap">Room Tags : Room Tag : Room Tag</div>
  <svg width="17" height="16" viewBox="0 0 17 16"><path d="M6 3l3-2h4l1 2v4H6z" fill="#d9f0d2" stroke="#2f8a3a"/><path d="M1 8l2-2h5v7l-2 2H1z" fill="#9fd0f3" stroke="#1b5c9a"/><path d="M12 6v3h3V6M13.500 9v6" stroke="#4a5560" stroke-width="1.500" fill="none"/></svg>
  <div class="ml-[7px] w-[205px] h-[19px] bg-white flex items-center justify-end"><svg class="mr-[3px]" width="9" height="6" viewBox="0 0 9 6"><path d="M1 1l3.500 3.500L8 1" fill="none" stroke="#999"/></svg></div>
  <svg class="ml-[8px]" width="15" height="15" viewBox="0 0 15 15"><path d="M5 1h9l-2 6-3 2-4-3z" fill="#ddd" stroke="#999"/><path d="M7 7l-3 4M1 14l2-4 5 1v3z" fill="#888" stroke="#888"/></svg>
  <div class="ml-[5px] w-[33px] text-[#333]">:0</div>
  <svg width="15" height="15" viewBox="0 0 15 15"><rect x=".7" y="1.700" width="13.500" height="12" fill="#f4f4f4" stroke="#3a4048" stroke-width="1.200"/><path d="M1 3h13" stroke="#3a4048" stroke-width="2"/><path d="M3 6h5M6 9h6M6 11.500h6M4 6v6" stroke="#3a4048"/></svg>
  <svg class="ml-[11px]" width="16" height="15" viewBox="0 0 16 15"><rect x="1" y="1" width="14" height="13" fill="#9b9b9b"/><path d="M1 4l7-1v8l3 3" stroke="#666" fill="none"/></svg>
  <div class="ml-[7px] w-[205px] h-[19px] bg-white border border-[#e2e2e2] flex items-center justify-between text-[#777] pl-[2px]"><span class="text-[12px] tracking-[-0.25px]">Main Model</span><div class="flex items-center h-full border-l border-[#e2e2e2] pl-[4px]"><svg class="mr-[2px]" width="9" height="6" viewBox="0 0 9 6"><path d="M1 1l3.500 3.500L8 1" fill="none" stroke="#888"/></svg></div></div>
  <svg class="ml-[227px]" width="169" height="18" viewBox="0 0 169 18"><g fill="none" stroke="#d9a520" stroke-width="2"><circle cx="4" cy="5" r="2.500"/><circle cx="11" cy="5" r="2.500"/></g><path d="M27 10l6-8v8zM27 13h9" stroke="#2a6ca8" fill="#bfe0f7" stroke-width="1.300"/><path d="M54 2h9l-2 5h2v3h-9V7h2zM58 10v5" fill="#f0a24a" stroke="#a85a14"/><path d="M79 3l8-1v10l-8 3z" fill="#9fd0f3" stroke="#1b5c9a"/><path d="M109 1v10M104 6h10M107.500 2.500L109 1l1.500 1.500M105.500 4.500L104 6l1.500 1.500" stroke="#222" fill="none"/><circle cx="138" cy="9" r="5" fill="none" stroke="#aaa" stroke-width="3" stroke-dasharray="2.500 1"/><path d="M154 3h14l-5.500 6v7h-3V9z" fill="#8d949d" stroke="#555"/><use href="#cur" x="5" y="4" width="9" height="13"/><use href="#cur" x="32" y="4" width="9" height="13"/><use href="#cur" x="58" y="4" width="9" height="13"/><use href="#cur" x="84" y="4" width="9" height="13"/><use href="#cur" x="110" y="4" width="9" height="13"/><use href="#redx" x="34" y="1" width="7" height="7"/><use href="#redx" x="87" y="1" width="7" height="7"/></svg>
  <div class="text-[#333]">:0</div>
  <div class="ml-auto mr-[20px] w-[9px] h-[20px] border-x border-[#dedede]"></div>
</footer>

<!-- Taskbar -->
<div class="h-[40px] shrink-0 flex items-center bg-[linear-gradient(90deg,#46232e_0px,#46232e_48px,#511d21_392px,#45231f_440px,#42302a_500px,#42302a_640px,#432a22_760px,#4c2722_860px,#54231f_930px,#4a1c1c_965px,#2b1a1a_1000px,#1d2324_1050px,#20353a_1150px,#243f45_1366px)] text-white">
  <svg class="ml-[16px]" width="16" height="16" viewBox="0 0 16 16"><path d="M0 0h7.500v7.500H0zM8.500 0H16v7.500H8.500zM0 8.500h7.500V16H0zM8.500 8.500H16V16H8.500z" fill="#fff"/></svg>
  <div class="ml-[16px] w-[344px] h-[40px] bg-[#f2f2f2] border border-[#c9c9c9] flex items-center text-[#333] text-[14.500px]">
    <svg class="ml-[11px]" width="18" height="18" viewBox="0 0 18 18"><circle cx="11" cy="6.500" r="5" fill="none" stroke="#222" stroke-width="1.400"/><path d="M7.500 10.500L1 17" stroke="#222" stroke-width="1.400"/></svg>
    <span class="ml-[10px] tracking-[-0.3px] whitespace-nowrap">Type here to search</span>
  </div>
  <div class="flex w-[539px] h-[40px]">
    <div class="w-[48px] flex items-center justify-center"><div class="w-[16px] h-[16px] rounded-full border-2 border-white"></div></div>
    <div class="w-[47px] flex items-center justify-center"><svg width="18" height="16" viewBox="0 0 18 16"><path d="M1.500 0v3h10V0M1.500 16v-3h10v3M1.500 5.500h10v5h-10zM15 0v3M15 8v8" fill="none" stroke="#fff" stroke-width="1.200"/><path d="M13.500 4.500h3v3h-3z" fill="#fff"/></svg></div>
    <div class="w-[54px] flex items-center justify-center"><svg width="22" height="20" viewBox="0 0 22 20"><path d="M0 1h9l1 2h12v16H0z" fill="#e5a50a"/><path d="M0 4h10l1-1h11v15H0z" fill="#fbd25c"/><path d="M4 19v-8h14v8h-4v-4H8v4z" fill="#3b93dd"/></svg></div>
    <div class="w-[45px] flex items-center justify-center"><svg width="24" height="26" viewBox="0 0 24 26"><path d="M7 8V2h10v6" fill="none" stroke="#dfe6ea" stroke-width="1.800"/><path d="M1 7h22v17H1z" fill="#f4f4f4"/><path d="M8 11h4v4H8z" fill="#f25022"/><path d="M13 11h4v4h-4z" fill="#7fba00"/><path d="M8 16h4v4H8z" fill="#00a4ef"/><path d="M13 16h4v4h-4z" fill="#ffb900"/></svg></div>
    <div class="w-[54px] flex items-center justify-center"><svg width="24" height="24" viewBox="0 0 24 24"><path d="M0 9L12 1l12 8v13H0z" fill="#1261b0"/><path d="M2 9h20v6l-10 4L2 15z" fill="#f2f6fa"/><path d="M0 9l12 9L0 23z" fill="#2aa5ec"/><path d="M24 9L0 23h24z" fill="#3bb6f3"/></svg></div>
    <div class="w-[43px] flex items-center justify-center"><svg width="20" height="24" viewBox="0 0 20 24"><path d="M12 1L3 5Q1 6 1 8v8l4 1V8l7-2z" fill="#b9213a"/><path d="M1 14v3l4 1 7 5V20l-5-2z" fill="#d14d8a"/><path d="M11 1l7 2.500q1 .5 1 2v13q0 1.500-1 2L11 23l-4-3 5 0V5z" fill="#e8481c"/></svg></div>
    <div class="w-[56px] flex items-center justify-center"><svg width="22" height="22" viewBox="0 0 22 22"><path d="M0 0h22v22H0z" fill="#fcd20e"/><path d="M11 22V12h11z" fill="#3a3a3a"/><path d="M22 12v10H11z" fill="#e8b400"/></svg></div>
    <div class="w-[44px] flex items-center justify-center"><svg width="24" height="24" viewBox="0 0 24 24"><circle cx="12" cy="12" r="12" fill="#1ed760"/><path d="M5 8.500q8-2.500 14 1.200M5.500 12.500q7-2 12 1M6.500 16q5-1.500 9.500 1" stroke="#111" stroke-width="2" fill="none" stroke-linecap="round"/></svg></div>
    <div class="w-[54px] flex items-center justify-center"><svg width="24" height="24" viewBox="0 0 24 24"><circle cx="12" cy="12" r="11.500" fill="#1b7fd1"/><path d="M1 10Q3 1 13 .5 23 2 23.500 10q0 5-6 5-4 0-3-3 1-4-4-5-6 0-9.500 3z" fill="#3fcf8e"/><path d="M1 10Q4 1 13 .5 8 4 10 7 4 7 1 10z" fill="#2fb0d8"/><path d="M9 10q-4 7 2 11 5 2 9-2-8 2-9-5 0-3 1-4z" fill="#0c4f9e"/></svg></div>
    <div class="w-[42px] flex flex-col items-center justify-end"><svg class="mb-[6px]" width="22" height="22" viewBox="0 0 22 22"><rect x="0" y="1" width="22" height="15" rx="1.500" fill="#7dc242"/><path d="M4 13q-1-4 3-4 1-5 6-4 3 1 3 4 3 0 3 4z" fill="#fff"/><path d="M8 16h6v3h3v2H5v-2h3z" fill="#7dc242"/></svg><div class="w-[40px] h-[2px] bg-[#76b9ed]"></div></div>
    <div class="ml-[4px] w-[48px] flex flex-col items-center justify-end bg-white/20"><svg class="mb-[6px]" width="24" height="24" viewBox="0 0 24 24"><rect width="24" height="24" fill="#eef4fa"/><path d="M6 3v18h4v-6l4 6h5l-5-7q4-1.500 4-5.500Q18 3 12 3z" fill="#1c5c9e"/><path d="M6 3h6q5 0 5 5t-5 5H9v8H6z" fill="#2d86cf"/><path d="M10 6h2q2 0 2 1.800T12 10h-2z" fill="#eef4fa"/></svg><div class="w-[48px] h-[2px] bg-[#76b9ed]"></div></div>
  </div>
  <div class="ml-[195px] w-[22px] h-[22px] rounded-full bg-[#1592d4] border-2 border-white text-[16px] font-bold flex items-center justify-center">?</div>
  <svg class="ml-[10px]" width="12" height="8" viewBox="0 0 12 8"><path d="M1 7l5-5 5 5" fill="none" stroke="#fff" stroke-width="1.300"/></svg>
  <svg class="ml-[12px]" width="16" height="10" viewBox="0 0 16 10"><rect x=".7" y=".7" width="12.600" height="8.600" fill="none" stroke="#fff" stroke-width="1.300"/><path d="M3 3h6v4H3zM14 3h2v4h-2z" fill="#fff"/></svg>
  <svg class="ml-[10px]" width="14" height="14" viewBox="0 0 14 14"><path d="M1 13Q1 1 13 1M4.500 13Q4.500 4.500 13 4.500M8 13q0-5 5-5" fill="none" stroke="#ddd" stroke-width="1.200"/><circle cx="12" cy="12" r="1.500" fill="#fff"/></svg>
  <svg class="ml-[7px]" width="16" height="14" viewBox="0 0 16 14"><path d="M1 5h2l3.500-3.500v11L3 9H1z" fill="none" stroke="#fff"/><path d="M9 5q1 2 0 4M11 3q2.500 4 0 8M13 1q4 6 0 12" fill="none" stroke="#ddd"/></svg>
  <div class="ml-[4px] w-[62px] text-center text-[11.500px] leading-[18px] tracking-[-0.35px] whitespace-nowrap">8:27 AM<br>10/12/2020</div>
  <svg class="ml-[14px]" width="26" height="26" viewBox="0 0 26 26"><path d="M1 3h16v12H9l-4 4v-4H1z" fill="#fff"/><path d="M4 6.500h10M4 9.500h10M4 12.500h6" stroke="#26393e"/><circle cx="16" cy="18" r="7" fill="#3a484c" stroke="#8a9699"/><text x="16" y="22" text-anchor="middle" font-size="11" fill="#fff">2</text></svg>
</div>
</body>
</html>
